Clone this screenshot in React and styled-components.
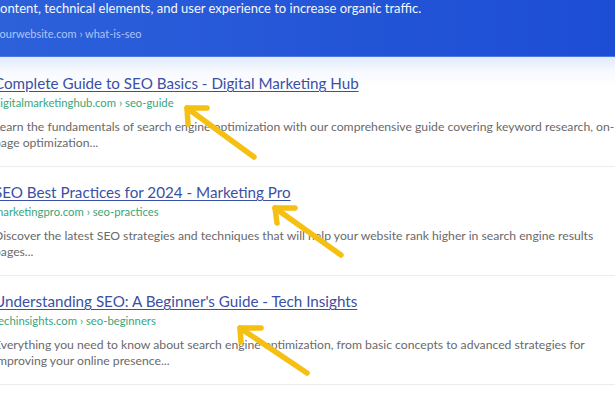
import React from "react";
import styled, { createGlobalStyle } from "styled-components";

const Global = createGlobalStyle`
  html, body { margin: 0; padding: 0; background: #ffffff; }
  body { font-family: "Lato", "Open Sans", sans-serif; overflow: hidden; }
`;

const Page = styled.div`
  position: relative;
  width: 615px;
  height: 410px;
  overflow: hidden;
  background: #fff;
`;

const Shift = styled.div`
  margin-left: -6px;
  width: 630px;
`;

const Banner = styled.div`
  background: linear-gradient(90deg, #2d61da 0%, #2456d7 50%, #1c4dd5 100%);
  padding: 0 0 16px 0;
  margin-top: -1px;
  height: 58px;
  box-sizing: border-box;
  border-bottom: 1px solid #4a79e0;
`;

const BannerText = styled.div`
  color: #f4f7ff;
  font-size: 13px;
  line-height: 18px;
`;

const BannerUrl = styled.div`
  margin-top: 10px;
  color: rgba(220, 230, 255, 0.75);
  font-size: 11px;
  line-height: 14px;
`;

const List = styled.div`
  background: linear-gradient(180deg, #e2eafa 0px, #f6f9fe 14px, #ffffff 30px);
`;

const Result = styled.div`
  padding: ${(p) => (p.$first ? "16px" : "15px")} 0 15px 0;
  border-bottom: 1px solid #ececec;
`;

const Title = styled.a`
  display: block;
  color: #3a4fa6;
  font-size: 15.2px;
  line-height: 20px;
  text-decoration: underline;
  text-underline-offset: 2px;
  text-decoration-thickness: 1px;
`;

const Url = styled.div`
  margin-top: 3px;
  color: #3aa57a;
  font-size: 11.3px;
  line-height: 14px;
`;

const Desc = styled.div`
  margin-top: 9px;
  color: #6a6a6a;
  font-size: 12.2px;
  line-height: 16px;
`;

const Overlay = styled.svg`
  position: absolute;
  left: 0;
  top: 0;
  pointer-events: none;
`;

const results = [
  {
    title: "Complete Guide to SEO Basics - Digital Marketing Hub",
    url: "digitalmarketinghub.com › seo-guide",
    desc: "Learn the fundamentals of search engine optimization with our comprehensive guide covering keyword research, on-page optimization...",
  },
  {
    title: "SEO Best Practices for 2024 - Marketing Pro",
    url: "marketingpro.com › seo-practices",
    desc: "Discover the latest SEO strategies and techniques that will help your website rank higher in search engine results pages...",
  },
  {
    title: "Understanding SEO: A Beginner's Guide - Tech Insights",
    url: "techinsights.com › seo-beginners",
    desc: "Everything you need to know about search engine optimization, from basic concepts to advanced strategies for improving your online presence...",
  },
];

const arrows = [
  { tip: [187, 108], tail: [254, 157], h: [207, 108], v: [188, 124] },
  { tip: [275, 208], tail: [341, 255], h: [295, 208], v: [277, 223] },
  { tip: [240, 328], tail: [307, 373], h: [261, 328], v: [241, 342] },
];

export default function App() {
  return (
    <Page>
      <Global />
      <Shift>
        <Banner>
          <BannerText>content, technical elements, and user experience to increase organic traffic.</BannerText>
          <BannerUrl>yourwebsite.com › what-is-seo</BannerUrl>
        </Banner>
        <List>
          {results.map((r, i) => (
            <Result key={i} $first={i === 0}>
              <Title href="#">{r.title}</Title>
              <Url>{r.url}</Url>
              <Desc>{r.desc}</Desc>
            </Result>
          ))}
        </List>
      </Shift>
      <Overlay width="615" height="410" viewBox="0 0 615 410">
        {arrows.map((a, i) => (
          <g key={i} stroke="#f6c013" strokeWidth="5.5" strokeLinecap="round" strokeLinejoin="round" fill="none">
            <line x1={a.tail[0]} y1={a.tail[1]} x2={a.tip[0]} y2={a.tip[1]} />
            <polyline points={`${a.h[0]},${a.h[1]} ${a.tip[0]},${a.tip[1]} ${a.v[0]},${a.v[1]}`} />
          </g>
        ))}
      </Overlay>
    </Page>
  );
}
